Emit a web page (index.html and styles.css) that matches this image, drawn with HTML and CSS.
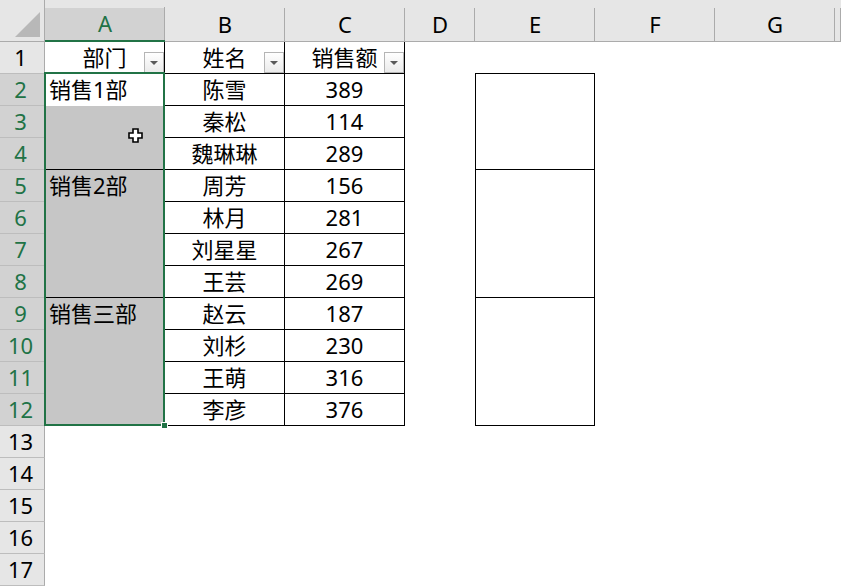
FILE: index.html
```html
<!DOCTYPE html>
<html lang="zh-CN">
<head>
<meta charset="utf-8">
<title>Sheet</title>
<link rel="stylesheet" href="styles.css">
</head>
<body>
<div class="sheet">
  <div class="corner"><svg width="44" height="41" viewBox="0 0 44 41"><polygon points="15,37 40,12 40,37" fill="#b8b8b8"/></svg></div>
  <div class="ch sel">A</div><div class="ch">B</div><div class="ch">C</div><div class="ch">D</div><div class="ch">E</div><div class="ch">F</div><div class="ch">G</div><div class="ch"></div>

  <div class="rh">1</div>
  <div class="a a1 hd">部门<span class="dd"></span></div><div class="t hd">姓名<span class="dd"></span></div><div class="t hd">销售额<span class="dd"></span></div><div class="c"></div><div class="c e1"></div><div class="c"></div><div class="c"></div><div class="c"></div>

  <div class="rh sel">2</div>
  <div class="a">销售1部</div><div class="t">陈雪</div><div class="t">389</div><div class="c"></div><div class="e"></div><div class="c"></div><div class="c"></div><div class="c"></div>

  <div class="rh sel">3</div>
  <div class="a g"></div><div class="t">秦松</div><div class="t">114</div><div class="c"></div><div class="e"></div><div class="c"></div><div class="c"></div><div class="c"></div>

  <div class="rh sel">4</div>
  <div class="a g bb"></div><div class="t">魏琳琳</div><div class="t">289</div><div class="c"></div><div class="e bb"></div><div class="c"></div><div class="c"></div><div class="c"></div>

  <div class="rh sel">5</div>
  <div class="a g">销售2部</div><div class="t">周芳</div><div class="t">156</div><div class="c"></div><div class="e"></div><div class="c"></div><div class="c"></div><div class="c"></div>

  <div class="rh sel">6</div>
  <div class="a g"></div><div class="t">林月</div><div class="t">281</div><div class="c"></div><div class="e"></div><div class="c"></div><div class="c"></div><div class="c"></div>

  <div class="rh sel">7</div>
  <div class="a g"></div><div class="t">刘星星</div><div class="t">267</div><div class="c"></div><div class="e"></div><div class="c"></div><div class="c"></div><div class="c"></div>

  <div class="rh sel">8</div>
  <div class="a g bb"></div><div class="t">王芸</div><div class="t">269</div><div class="c"></div><div class="e bb"></div><div class="c"></div><div class="c"></div><div class="c"></div>

  <div class="rh sel">9</div>
  <div class="a g">销售三部</div><div class="t">赵云</div><div class="t">187</div><div class="c"></div><div class="e"></div><div class="c"></div><div class="c"></div><div class="c"></div>

  <div class="rh sel">10</div>
  <div class="a g"></div><div class="t">刘杉</div><div class="t">230</div><div class="c"></div><div class="e"></div><div class="c"></div><div class="c"></div><div class="c"></div>

  <div class="rh sel">11</div>
  <div class="a g"></div><div class="t">王萌</div><div class="t">316</div><div class="c"></div><div class="e"></div><div class="c"></div><div class="c"></div><div class="c"></div>

  <div class="rh sel">12</div>
  <div class="a g bb"></div><div class="t">李彦</div><div class="t">376</div><div class="c"></div><div class="e bb"></div><div class="c"></div><div class="c"></div><div class="c"></div>

  <div class="rh">13</div>
  <div class="c"></div><div class="c"></div><div class="c"></div><div class="c"></div><div class="c"></div><div class="c"></div><div class="c"></div><div class="c"></div>
  <div class="rh">14</div>
  <div class="c"></div><div class="c"></div><div class="c"></div><div class="c"></div><div class="c"></div><div class="c"></div><div class="c"></div><div class="c"></div>
  <div class="rh">15</div>
  <div class="c"></div><div class="c"></div><div class="c"></div><div class="c"></div><div class="c"></div><div class="c"></div><div class="c"></div><div class="c"></div>
  <div class="rh">16</div>
  <div class="c"></div><div class="c"></div><div class="c"></div><div class="c"></div><div class="c"></div><div class="c"></div><div class="c"></div><div class="c"></div>
  <div class="rh">17</div>
  <div class="c"></div><div class="c"></div><div class="c"></div><div class="c"></div><div class="c"></div><div class="c"></div><div class="c"></div><div class="c"></div>

  <div class="selection"><span class="handle"></span></div>
  <svg class="cursor" width="15" height="15" viewBox="0 0 15 15"><polygon points="5,1 10,1 10,5 14,5 14,10 10,10 10,14 5,14 5,10 1,10 1,5 5,5" fill="#fff" stroke="#000" stroke-width="1.6" stroke-linejoin="miter"/></svg>
</div>
</body>
</html>
```
FILE: styles.css
```css
* { box-sizing: border-box; margin: 0; padding: 0; }
html, body { background: #fff; }
body {
  margin: 0;
  font-family: "Noto Sans", "Noto Sans CJK SC", sans-serif;
  font-size: 22px;
  color: #000;
  overflow: hidden;
}
.sheet {
  position: relative;
  display: grid;
  grid-template-columns: 45px 120px 120px 120px 70px 120px 120px 120px 6px;
  grid-template-rows: 42px repeat(17, 32px);
  width: 841px;
  height: 586px;
}
.corner {
  background: #e6e6e6;
  border-right: 1px solid #ababab;
  border-bottom: 1px solid #ababab;
}
.corner svg { display: block; }
.ch {
  background: linear-gradient(#ababab, #ababab) right bottom / 1px 33px no-repeat, #e6e6e6;
  border-bottom: 1px solid #ababab;
  padding-top: 8px;
  line-height: 32px;
  text-align: center;
}
.ch.sel {
  background: linear-gradient(#ababab, #ababab) right bottom / 1px 33px no-repeat,
              linear-gradient(#e6e6e6 0 8px, #d2d2d2 8px);
  border-bottom: 2px solid #217346;
  color: #217346;
  line-height: 31px;
}
.rh {
  background: #e6e6e6;
  border-right: 1px solid #ababab;
  border-bottom: 1px solid #bdbdbd;
  line-height: 31px;
  text-align: center;
  padding-right: 3px;
}
.rh.sel {
  background: #d2d2d2;
  color: #217346;
  border-bottom-color: #bdbdbd;
}
.c { background: #fff; }
.t {
  background: #fff;
  border-right: 1px solid #000;
  border-bottom: 1px solid #000;
  line-height: 31px;
  text-align: center;
}
.a {
  background: #fff;
  border-right: 1px solid #000;
  border-bottom: 1px solid transparent;
  line-height: 31px;
  padding-left: 4px;
  white-space: nowrap;
}
.a.g { background: #c6c6c6; }
.a.bb { border-bottom-color: #000; }
.a1 { text-align: center; padding-left: 0; }
.hd { position: relative; }
.dd {
  position: absolute;
  right: 0;
  bottom: 0;
  width: 20px;
  height: 21px;
  border: 1px solid #b5b5b5;
  background: linear-gradient(#ffffff, #ebebeb);
}
.dd::after {
  content: "";
  position: absolute;
  left: 5px;
  top: 8px;
  border-left: 4px solid transparent;
  border-right: 4px solid transparent;
  border-top: 4px solid #5a5a5a;
}
.e1 { border-bottom: 1px solid #000; }
.e {
  background: #fff;
  border-left: 1px solid #000;
  border-right: 1px solid #000;
}
.e.bb { border-bottom: 1px solid #000; }
.selection {
  position: absolute;
  left: 44px;
  top: 72px;
  width: 121px;
  height: 354px;
  border: 2px solid #217346;
}
.handle {
  position: absolute;
  left: 115px;
  top: 348px;
  width: 7px;
  height: 7px;
  background: #217346;
  border: 1px solid #fff;
}
.cursor {
  position: absolute;
  left: 128px;
  top: 128px;
}
```
